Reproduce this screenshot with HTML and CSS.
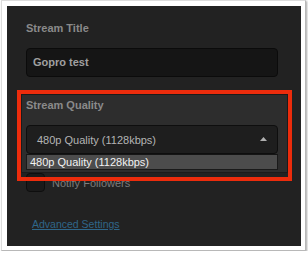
FILE: index.html
```html
<!DOCTYPE html>
<html>
<head>
<meta charset="utf-8">
<link rel="stylesheet" href="styles.css">
</head>
<body>
<div class="frame">
  <div class="panel">
    <div class="label">Stream Title</div>
    <div class="input">Gopro test</div>
    <div class="group">
      <div class="label">Stream Quality</div>
      <div class="select-wrap">
        <div class="select">
          <span>480p Quality (1128kbps)</span>
          <svg class="caret" width="7" height="4" viewBox="0 0 7 4"><path d="M0 4 L3.5 0 L7 4 Z" fill="#b0b0b0"/></svg>
        </div>
        <div class="menu"><div class="option">480p Quality (1128kbps)</div></div>
      </div>
    </div>
    <div class="check-row">
      <span class="checkbox"></span>
      <span class="check-label">Notify Followers</span>
    </div>
    <a class="link">Advanced Settings</a>
    <div class="annotation"></div>
  </div>
</div>
</body>
</html>
```

FILE: styles.css
```css
html, body {
  margin: 0;
  padding: 0;
  background: #ffffff;
}
body {
  font-family: "Liberation Sans", Arial, sans-serif;
}
.frame {
  margin-left: 1px;
  width: 296px;
  height: 242px;
  padding: 5px 2px 2px 5px;
  border: 1px solid #dcdcdc;
  border-right-color: #b8b8b8;
  border-bottom-color: #b8b8b8;
  box-shadow: 1px 1px 2px rgba(0,0,0,0.35);
  background: #ffffff;
}
.panel {
  position: relative;
  width: 294px;
  height: 240px;
  background: #222222;
  box-sizing: border-box;
  padding: 15px 0 0 19px;
}
.label {
  font-size: 11px;
  font-weight: bold;
  line-height: 14px;
  color: #8a8a8a;
}
.input {
  margin-top: 13px;
  width: 252px;
  height: 29px;
  box-sizing: border-box;
  background: #151515;
  border: 1px solid #0b0b0b;
  border-radius: 4px;
  padding-left: 6px;
  font-size: 11px;
  font-weight: bold;
  line-height: 27px;
  color: #a0a0a0;
}
.group {
  margin-top: 17px;
  margin-left: -5px;
  width: 267px;
  height: 79px;
  box-sizing: border-box;
  background: #2d2d2d;
  border: 1px solid #1b1b1b;
  padding: 3px 0 0 4px;
}
.select-wrap {
  position: relative;
  margin-top: 13px;
  width: 252px;
}
.select {
  height: 29px;
  box-sizing: border-box;
  background: #1e1e1e;
  border: 1px solid #0e0e0e;
  border-radius: 4px;
  padding: 0 10px 0 10px;
  display: flex;
  align-items: center;
  justify-content: space-between;
  font-size: 11px;
  color: #b4b4b4;
}
.caret {
  display: block;
  margin-top: -2px;
}
.menu {
  position: absolute;
  left: 0;
  top: 29px;
  width: 252px;
  box-sizing: border-box;
  border: 1px solid #1a1a1a;
  border-top-color: #151515;
  background: #4c4c4c;
}
.option {
  height: 14px;
  line-height: 14px;
  padding-left: 3px;
  font-size: 11px;
  color: #f2f2f2;
}
.check-row {
  display: flex;
  align-items: center;
  gap: 7px;
  height: 19px;
}
.checkbox {
  width: 19px;
  height: 19px;
  box-sizing: border-box;
  border: 1px solid #0e0e0e;
  border-radius: 4px;
  background: #1a1a1a;
}
.check-label {
  font-size: 11px;
  color: #7c7c7c;
}
.link {
  display: inline-block;
  margin-top: 25px;
  margin-left: 6px;
  font-size: 10.5px;
  line-height: 14px;
  color: #2f6689;
  text-decoration: underline;
}
.annotation {
  position: absolute;
  left: 10px;
  top: 84px;
  width: 275px;
  height: 91px;
  box-sizing: border-box;
  border: 4px solid #ec2c0c;
}
```
